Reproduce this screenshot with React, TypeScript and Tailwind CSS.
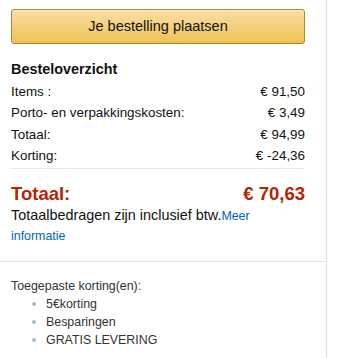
const rows = [
  { label: "Items :", value: "€ 91,50" },
  { label: "Porto- en verpakkingskosten:", value: "€ 3,49" },
  { label: "Totaal:", value: "€ 94,99" },
  { label: "Korting:", value: "€ -24,36" },
];

const discounts = ["5€korting", "Besparingen", "GRATIS LEVERING"];

export default function App() {
  return (
    <div className="min-h-[358px] w-[327px] border-r border-[#dddddd] bg-white font-['Liberation_Sans',Arial,sans-serif] text-[#111111]">
      <div className="pl-[11px] pr-[21px] pt-[9px] pb-[15px]">
        <button className="flex h-[35px] w-full items-center justify-center rounded-[3px] border border-[#a88734] bg-linear-to-b from-[#f7dfa5] to-[#f0c14b] text-[14.5px] text-[#111111] shadow-[inset_0_1px_0_rgba(255,255,255,0.4)]">
          Je bestelling plaatsen
        </button>

        <h2 className="mt-[15px] mb-[2px] text-[14.4px] leading-[20px] font-bold">Besteloverzicht</h2>
        <div className="text-[13.4px] leading-[21.3px]">
          {rows.map((r) => (
            <div key={r.label} className="flex justify-between">
              <span>{r.label}</span>
              <span>{r.value}</span>
            </div>
          ))}
        </div>

        <div className="mt-[2px] h-px bg-[#e7e7e7]" />

        <div className="mt-[14px] flex justify-between text-[18.5px] leading-[22px] font-bold text-[#b12704]">
          <span>Totaal:</span>
          <span>€ 70,63</span>
        </div>
        <p className="mt-px w-[262px] text-[14.4px] leading-[19px]">
          Totaalbedragen zijn inclusief btw.<a className="text-[12.4px] text-[#0066c0]">Meer informatie</a>
        </p>
      </div>

      <div className="border-t border-[#e7e7e7] pl-[11px] pt-[15px] text-[12.4px] leading-[18px] text-[#333333]">
        <p>Toegepaste korting(en):</p>
        <ul className="ml-[21px]">
          {discounts.map((d) => (
            <li key={d} className="flex items-center">
              <span className="mr-[10px] h-[4px] w-[4px] rounded-full bg-[#b8b8b8]" />
              {d}
            </li>
          ))}
        </ul>
      </div>
    </div>
  );
}
